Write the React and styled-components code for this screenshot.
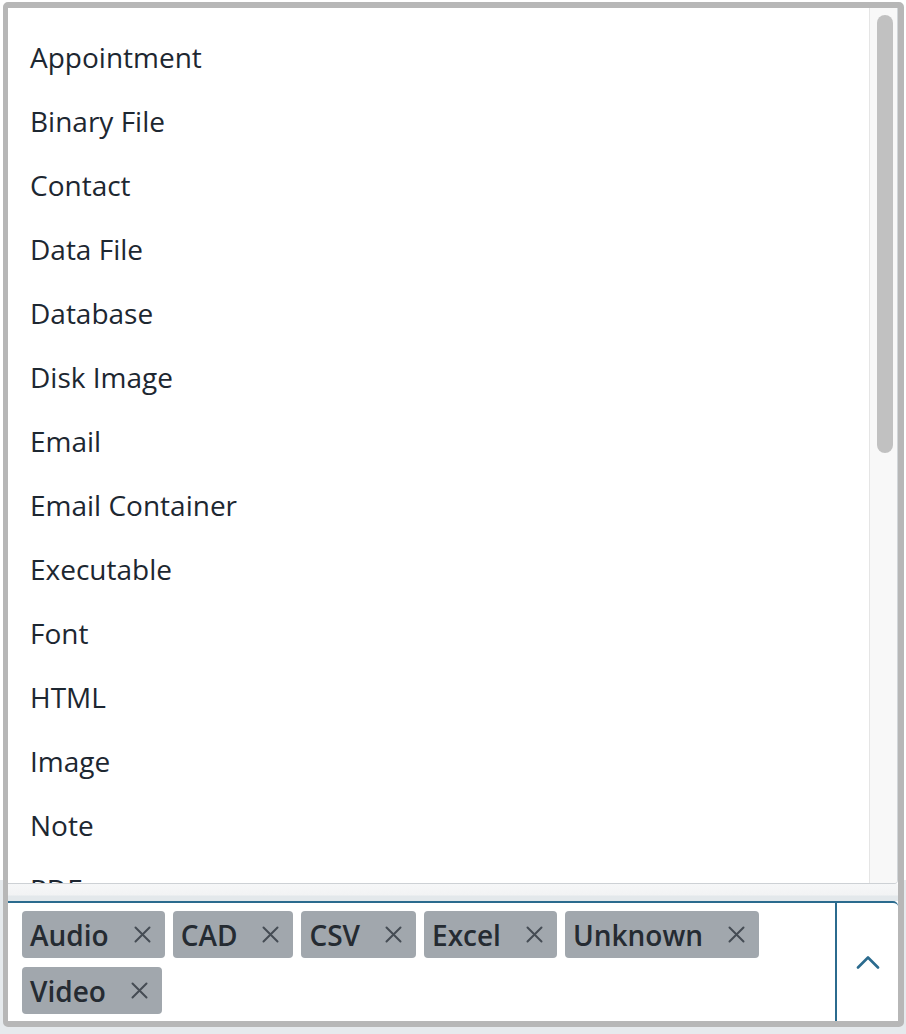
import React from "react";
import styled, { createGlobalStyle } from "styled-components";

const Global = createGlobalStyle`
  html, body { margin: 0; padding: 0; background: #ffffff; }
  body { font-family: "Open Sans", "Noto Sans", sans-serif; }
  * { box-sizing: border-box; }
`;

const Page = styled.div`
  width: 906px;
  height: 1034px;
  padding: 2px 2px 7px 3px;
  background: linear-gradient(to bottom, #ffffff 0, #ffffff 880px, #e6eaed 880px, #e6eaed 100%);
`;

const Frame = styled.div`
  width: 901px;
  height: 1025px;
  border-style: solid;
  border-color: #b7b7b7;
  border-width: 6px 6px 6px 5px;
  border-radius: 5px;
  background: #ffffff;
  display: flex;
  flex-direction: column;
  overflow: hidden;
`;

const Menu = styled.div`
  height: 876px;
  display: flex;
  border-right: 1px solid #d2d6d9;
  border-bottom: 1px solid #cdd1d5;
  border-bottom-right-radius: 4px;
  overflow: hidden;
  background: #ffffff;
  flex-shrink: 0;
`;

const List = styled.div`
  flex: 1;
  overflow: hidden;
  padding: 17px 0 0 22px;
`;

const Option = styled.div`
  height: 64px;
  line-height: 64px;
  font-size: 28px;
  font-weight: 400;
  color: #1d2731;
  white-space: nowrap;
`;

const Track = styled.div`
  width: 28px;
  border-left: 1px solid #e5e5e5;
  background: #f8f8f8;
  padding: 7px 0 0 7px;
`;

const Thumb = styled.div`
  width: 16px;
  height: 438px;
  border-radius: 8px;
  background: #c1c1c1;
`;

const Gap = styled.div`
  height: 17px;
  flex-shrink: 0;
  background: linear-gradient(to bottom, #f6f7f8 0, #f2f3f4 11px, #e3e8eb 12px, #e3e8eb 100%);
`;

const Control = styled.div`
  flex: 1;
  display: flex;
  border-top: 2px solid #2b6b8e;
  border-top-right-radius: 5px;
  background: #ffffff;
`;

const Chips = styled.div`
  flex: 1;
  display: flex;
  flex-wrap: wrap;
  align-content: flex-start;
  gap: 9px 8px;
  padding: 8px 10px 6px 14px;
`;

const Chip = styled.div`
  display: flex;
  align-items: center;
  height: 47px;
  padding: 0 14px 0 8px;
  background: #a1a7ad;
  border-radius: 4px;
  font-size: 28px;
  font-weight: 600;
  line-height: normal;
  color: #252b32;
`;

const Remove = styled.span`
  display: flex;
  margin-left: 25px;
  color: #454c54;
`;

const Indicator = styled.div`
  width: 63px;
  border-left: 2px solid #2b6b8e;
  display: flex;
  align-items: center;
  justify-content: center;
  color: #2b6b8e;
`;

const options = [
  "Appointment",
  "Binary File",
  "Contact",
  "Data File",
  "Database",
  "Disk Image",
  "Email",
  "Email Container",
  "Executable",
  "Font",
  "HTML",
  "Image",
  "Note",
  "PDF",
  "Presentation",
  "Spreadsheet",
];

const selected = ["Audio", "CAD", "CSV", "Excel", "Unknown", "Video"];

const CloseIcon = () => (
  <svg width="17" height="17" viewBox="0 0 17 17" fill="none">
    <path d="M1.5 1.5 L15.5 15.5 M15.5 1.5 L1.5 15.5" stroke="currentColor" strokeWidth="2" strokeLinecap="round" />
  </svg>
);

const ChevronUp = () => (
  <svg width="24" height="14" viewBox="0 0 24 14" fill="none">
    <path d="M2 12.5 L12 2.5 L22 12.5" stroke="currentColor" strokeWidth="2.6" strokeLinecap="round" strokeLinejoin="round" />
  </svg>
);

export default function App() {
  return (
    <>
      <Global />
      <Page>
        <Frame>
          <Menu>
            <List>
              {options.map((o) => (
                <Option key={o}>{o}</Option>
              ))}
            </List>
            <Track>
              <Thumb />
            </Track>
          </Menu>
          <Gap />
          <Control>
            <Chips>
              {selected.map((s) => (
                <Chip key={s}>
                  {s}
                  <Remove>
                    <CloseIcon />
                  </Remove>
                </Chip>
              ))}
            </Chips>
            <Indicator>
              <ChevronUp />
            </Indicator>
          </Control>
        </Frame>
      </Page>
    </>
  );
}
